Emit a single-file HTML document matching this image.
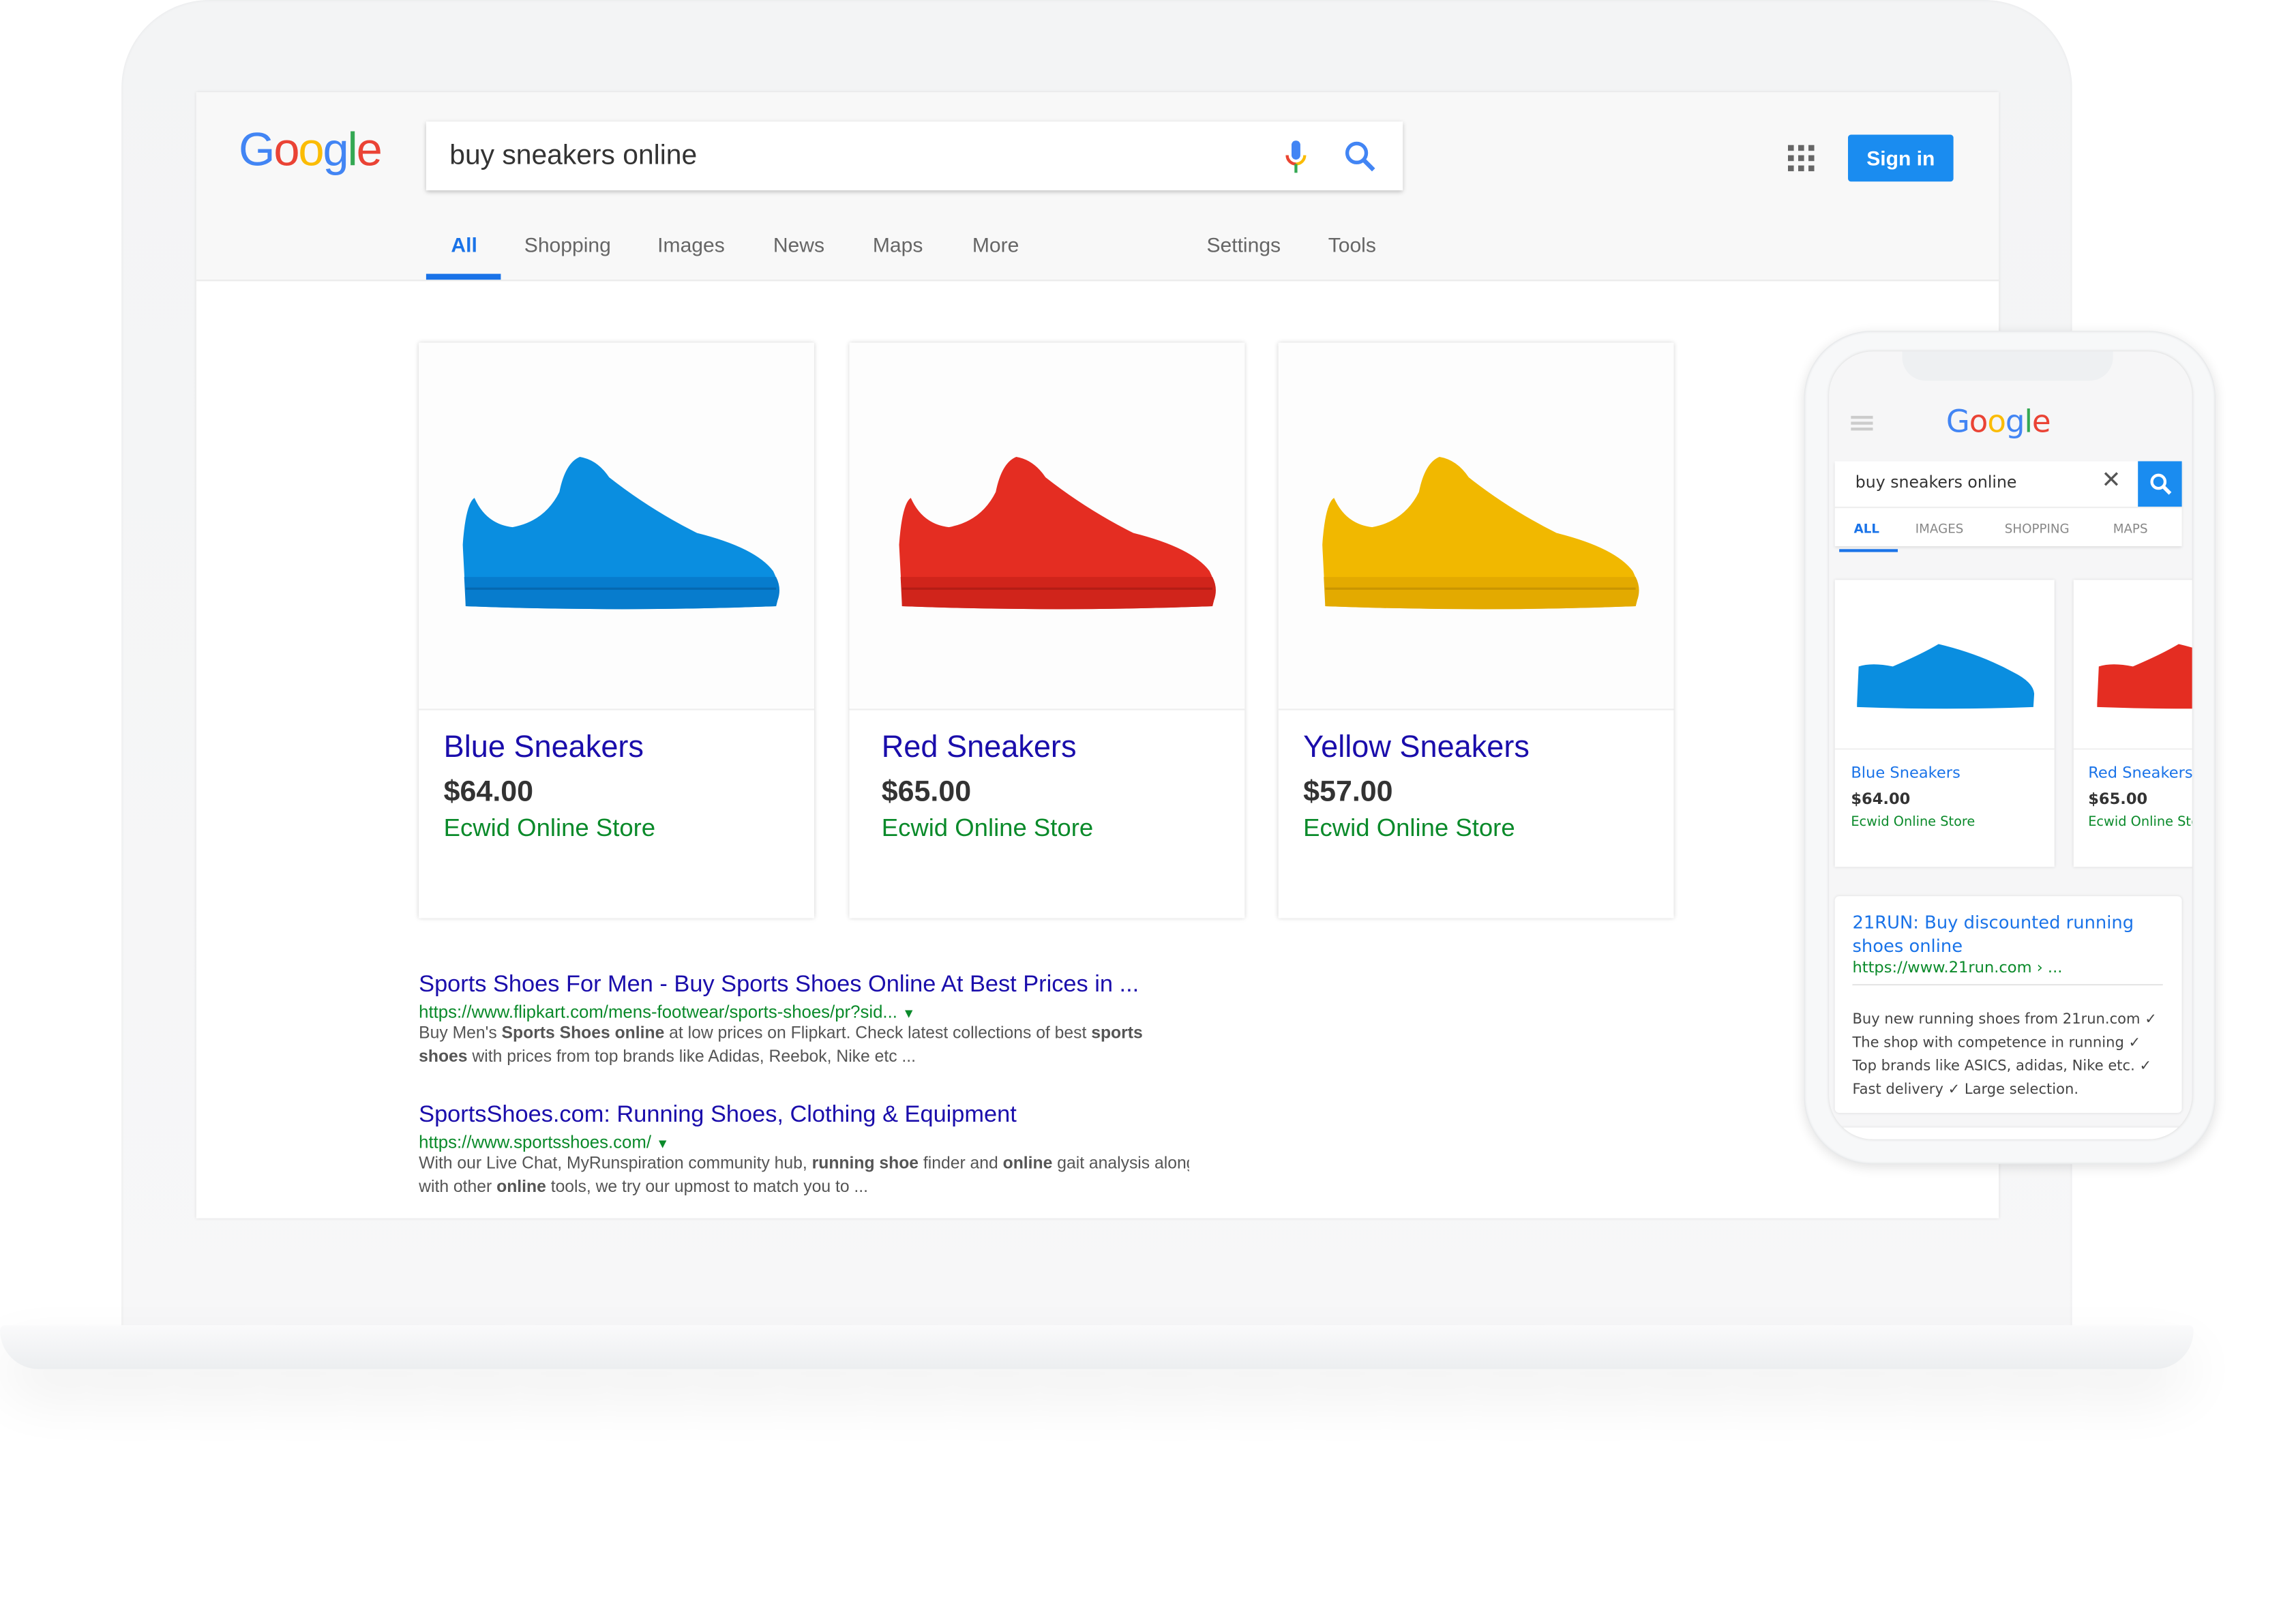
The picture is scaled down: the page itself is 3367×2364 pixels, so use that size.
<!DOCTYPE html>
<html><head><meta charset="utf-8">
<style>
html,body{margin:0;padding:0;background:#fff;width:3367px;height:2363px;overflow:hidden}
#w{position:absolute;left:0;top:0;width:1568px;height:1101px;transform:scale(2.1474);transform-origin:0 0;font-family:"Liberation Sans",Arial,sans-serif}
.a{position:absolute}
.card{position:absolute;background:#fff;box-shadow:0 0 3px rgba(0,0,0,.18);top:234px;width:270px;height:393px}
.card .img{position:absolute;left:0;top:0;width:270px;height:250px;border-bottom:1px solid #eee;background:#fdfdfd}
.card .t{position:absolute;left:17px;top:265px;font-size:21px;color:#1a0dab}
.card .p{position:absolute;left:17px;top:296px;font-size:20px;font-weight:bold;color:#333}
.card .s{position:absolute;left:17px;top:322px;font-size:17px;color:#0a8a2a}
.tab{position:absolute;top:159px;font-size:14px;color:#666}
.rt{position:absolute;left:286px;font-size:16px;color:#1a0dab;white-space:nowrap}
.ru{position:absolute;left:286px;font-size:12px;color:#0a8a2a;white-space:nowrap}
.rs{position:absolute;left:286px;font-size:11.5px;color:#555;line-height:16px;width:540px;white-space:nowrap;overflow:hidden}
.m{font-family:"DejaVu Sans",sans-serif}
</style></head><body><div id="w">
<div class="a" style="left:83px;top:0;width:1332px;height:915px;background:linear-gradient(#f3f4f5,#f7f7f8);border-radius:60px 60px 0 0;box-shadow:inset 0 0 2px #e4e5e7"></div>
<div class="a" style="left:0;top:905px;width:1498px;height:30px;background:linear-gradient(#fafafb,#eceef0);border-radius:4px 4px 30px 30px;box-shadow:0 18px 40px rgba(0,0,0,.07)"></div>
<div class="a" style="left:134px;top:63px;width:1231px;height:769px;background:#fff;box-shadow:0 0 2px #d8d8d8;overflow:hidden">
 <div class="a" style="left:0;top:0;width:1231px;height:128px;background:#f8f8f8;border-bottom:1px solid #ebebeb"></div>
</div>
<div class="a" style="left:163px;top:84px;font-size:32px;letter-spacing:-1px"><span style="color:#4285f4">G</span><span style="color:#ea4335">o</span><span style="color:#fbbc05">o</span><span style="color:#4285f4">g</span><span style="color:#34a853">l</span><span style="color:#ea4335">e</span></div>
<div class="a" style="left:291px;top:83px;width:667px;height:47px;background:#fff;box-shadow:0 1px 3px rgba(0,0,0,.25)"></div>
<div class="a" style="left:307px;top:96px;font-size:19px;color:#333">buy sneakers online</div>
<svg class="a" style="left:876px;top:96px" width="18" height="24" viewBox="0 0 18 24"><rect x="6" y="0" width="6" height="13" rx="3" fill="#4285f4"/><path d="M3 10a6 6 0 0 0 12 0" stroke="#fbbc05" stroke-width="2" fill="none"/><path d="M3 10a6 6 0 0 0 6 6" stroke="#ea4335" stroke-width="2" fill="none"/><rect x="8" y="16" width="2" height="6" fill="#34a853"/></svg>
<svg class="a" style="left:918px;top:96px" width="22" height="22" viewBox="0 0 22 22"><circle cx="8.5" cy="8.5" r="6.5" stroke="#4285f4" stroke-width="2.5" fill="none"/><path d="M13.5 13.5L20 20" stroke="#4285f4" stroke-width="3"/></svg>
<svg class="a" style="left:1221px;top:99px" width="18" height="18"><g fill="#666"><rect x="0" y="0" width="4" height="4"/><rect x="7" y="0" width="4" height="4"/><rect x="14" y="0" width="4" height="4"/><rect x="0" y="7" width="4" height="4"/><rect x="7" y="7" width="4" height="4"/><rect x="14" y="7" width="4" height="4"/><rect x="0" y="14" width="4" height="4"/><rect x="7" y="14" width="4" height="4"/><rect x="14" y="14" width="4" height="4"/></g></svg>
<div class="a" style="left:1262px;top:92px;width:72px;height:32px;background:#1a8cf0;border-radius:2px;color:#fff;font-weight:bold;font-size:14px;line-height:32px;text-align:center">Sign in</div>
<div class="tab" style="left:308px;color:#1a73e8;font-weight:bold">All</div>
<div class="tab" style="left:358px">Shopping</div>
<div class="tab" style="left:449px">Images</div>
<div class="tab" style="left:528px">News</div>
<div class="tab" style="left:596px">Maps</div>
<div class="tab" style="left:664px">More</div>
<div class="tab" style="left:824px">Settings</div>
<div class="tab" style="left:907px">Tools</div>
<div class="a" style="left:291px;top:187px;width:51px;height:4px;background:#1a73e8"></div>
<svg width="0" height="0" style="position:absolute"><defs><path id="sh" d="M2 100 L0 62 Q2 34 8 30 Q16 48 34 50 Q56 46 66 26 Q70 6 80 2 Q92 4 100 16 Q128 38 160 54 Q200 64 212 80 Q218 92 215 100 L214 104 Q110 108 2 104 Z"/><path id="so" d="M1 84 L214 84 Q218 92 215 100 L214 104 Q110 108 2 104 Z"/></defs></svg>
<div class="card" style="left:286px"><div class="img"><svg class="a" style="left:30px;top:76px" width="220" height="110"><use href="#sh" fill="#0a8ee0"/><use href="#so" fill="#077ccd"/><path d="M2 92 L214 92" stroke="#0568b0" stroke-width="1.5"/></svg></div><div class="t">Blue Sneakers</div><div class="p">$64.00</div><div class="s">Ecwid Online Store</div></div>
<div class="card" style="left:580px"><div class="img"><svg class="a" style="left:34px;top:76px" width="220" height="110"><use href="#sh" fill="#e42d22"/><use href="#so" fill="#d0241b"/><path d="M2 92 L214 92" stroke="#b31c15" stroke-width="1.5"/></svg></div><div class="t" style="left:22px">Red Sneakers</div><div class="p" style="left:22px">$65.00</div><div class="s" style="left:22px">Ecwid Online Store</div></div>
<div class="card" style="left:873px"><div class="img"><svg class="a" style="left:30px;top:76px" width="220" height="110"><use href="#sh" fill="#f1b800"/><use href="#so" fill="#e3aa00"/><path d="M2 92 L214 92" stroke="#c99500" stroke-width="1.5"/></svg></div><div class="t">Yellow Sneakers</div><div class="p">$57.00</div><div class="s">Ecwid Online Store</div></div>
<div class="rt" style="top:664px">Sports Shoes For Men - Buy Sports Shoes Online At Best Prices in ...</div>
<div class="ru" style="top:684px">https://www.flipkart.com/mens-footwear/sports-shoes/pr?sid... <span style="font-size:9px">▼</span></div>
<div class="rs" style="top:698px">Buy Men's <b>Sports Shoes online</b> at low prices on Flipkart. Check latest collections of best <b>sports</b><br><b>shoes</b> with prices from top brands like Adidas, Reebok, Nike etc ...</div>
<div class="rt" style="top:753px">SportsShoes.com: Running Shoes, Clothing &amp; Equipment</div>
<div class="ru" style="top:773px">https://www.sportsshoes.com/ <span style="font-size:9px">▼</span></div>
<div class="rs" style="top:787px;width:526px">With our Live Chat, MyRunspiration community hub, <b>running shoe</b> finder and <b>online</b> gait analysis along<br>with other <b>online</b> tools, we try our upmost to match you to ...</div>
<div class="a" style="left:1232px;top:226px;width:281px;height:569px;background:#f7f8f9;border-radius:46px;box-shadow:0 2px 8px rgba(0,0,0,.12), inset 0 0 2px #d0d3d6"></div>
<div class="a" style="left:1249px;top:240px;width:248px;height:538px;background:#f6f6f7;border-radius:30px;overflow:hidden;box-shadow:0 0 2px #d8d8d8">
 <div class="a" style="left:50px;top:-4px;width:144px;height:24px;background:#eef0f2;border-radius:0 0 16px 16px"></div>
 <div class="a" style="left:15px;top:44px;width:15px;height:2px;background:#ccc;box-shadow:0 4px 0 #ccc,0 8px 0 #ccc"></div>
 <div class="a m" style="left:80px;top:36px;font-size:21px;letter-spacing:-0.5px"><span style="color:#4285f4">G</span><span style="color:#ea4335">o</span><span style="color:#fbbc05">o</span><span style="color:#4285f4">g</span><span style="color:#34a853">l</span><span style="color:#ea4335">e</span></div>
 <div class="a" style="left:4px;top:75px;width:237px;height:58px;background:#fff;box-shadow:0 1px 2px rgba(0,0,0,.1)"></div>
 <div class="a m" style="left:18px;top:83px;font-size:11px;color:#333">buy sneakers online</div>
 <div class="a" style="left:186px;top:78px;font-size:16px;color:#555">✕</div>
 <div class="a" style="left:211px;top:75px;width:30px;height:31px;background:#1a8cf0"></div>
 <svg class="a" style="left:219px;top:83px" width="15" height="15"><circle cx="6" cy="6" r="4.5" stroke="#fff" stroke-width="2" fill="none"/><path d="M9.5 9.5L14 14" stroke="#fff" stroke-width="2.5"/></svg>
 <div class="a" style="left:4px;top:106px;width:237px;height:1px;background:#eee"></div>
 <div class="a m" style="left:17px;top:117px;font-size:8.5px;color:#1a73e8;font-weight:bold">ALL</div>
 <div class="a m" style="left:59px;top:117px;font-size:8.5px;color:#888">IMAGES</div>
 <div class="a m" style="left:120px;top:117px;font-size:8.5px;color:#888">SHOPPING</div>
 <div class="a m" style="left:194px;top:117px;font-size:8.5px;color:#888">MAPS</div>
 <div class="a" style="left:7px;top:135px;width:40px;height:2px;background:#1a73e8"></div>
 <div class="a" style="left:4px;top:156px;width:150px;height:196px;background:#fff;box-shadow:0 0 2px rgba(0,0,0,.12)">
  <div class="a" style="left:0;top:0;width:150px;height:115px;border-bottom:1px solid #f0f0f0"></div>
  <svg class="a" style="left:14px;top:28px" width="125" height="60" viewBox="0 0 220 106" preserveAspectRatio="none"><path d="M2 100 L4 55 Q20 50 45 55 Q80 40 100 28 Q150 40 190 62 Q214 74 215 88 L214 104 Q110 108 2 104Z" fill="#0a8ee0"/></svg>
  <div class="a m" style="left:11px;top:126px;font-size:10.5px;color:#1a73e8">Blue Sneakers</div>
  <div class="a m" style="left:11px;top:144px;font-size:10.5px;font-weight:bold;color:#333">$64.00</div>
  <div class="a m" style="left:11px;top:161px;font-size:9px;color:#0a8a2a">Ecwid Online Store</div>
 </div>
 <div class="a" style="left:167px;top:156px;width:150px;height:196px;background:#fff;box-shadow:0 0 2px rgba(0,0,0,.12)">
  <div class="a" style="left:0;top:0;width:150px;height:115px;border-bottom:1px solid #f0f0f0"></div>
  <svg class="a" style="left:15px;top:28px" width="125" height="60" viewBox="0 0 220 106" preserveAspectRatio="none"><path d="M2 100 L4 55 Q20 50 45 55 Q80 40 100 28 Q150 40 190 62 Q214 74 215 88 L214 104 Q110 108 2 104Z" fill="#e42d22"/></svg>
  <div class="a m" style="left:10px;top:126px;font-size:10.5px;color:#1a73e8;white-space:nowrap">Red Sneakers</div>
  <div class="a m" style="left:10px;top:144px;font-size:10.5px;font-weight:bold;color:#333">$65.00</div>
  <div class="a m" style="left:10px;top:161px;font-size:9px;color:#0a8a2a;white-space:nowrap">Ecwid Online Store</div>
 </div>
 <div class="a" style="left:4px;top:372px;width:237px;height:148px;background:#fff;box-shadow:0 0 2px rgba(0,0,0,.1);border-radius:3px">
  <div class="a m" style="left:12px;top:10px;font-size:12px;line-height:16px;color:#1a73e8;width:220px">21RUN: Buy discounted running shoes online</div>
  <div class="a m" style="left:12px;top:43px;font-size:10.5px;color:#0a8a2a">https://www.21run.com › ...</div>
  <div class="a" style="left:12px;top:60px;width:212px;height:1px;background:#e5e5e5"></div>
  <div class="a m" style="left:12px;top:77px;font-size:9.8px;line-height:16px;color:#444;white-space:nowrap">Buy new running shoes from 21run.com ✓<br>The shop with competence in running ✓<br>Top brands like ASICS, adidas, Nike etc. ✓<br>Fast delivery ✓ Large selection.</div>
 </div>
 <div class="a" style="left:4px;top:530px;width:237px;height:20px;background:#fff;box-shadow:0 0 2px rgba(0,0,0,.1)"></div>
</div>
</div></body></html>
